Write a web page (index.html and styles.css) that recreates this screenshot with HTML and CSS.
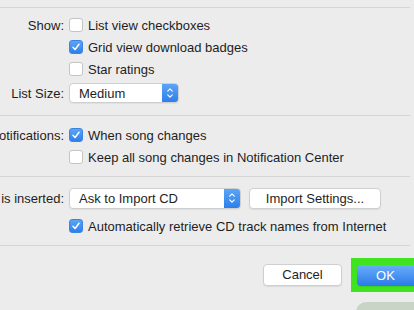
FILE: index.html
```html
<!DOCTYPE html>
<html>
<head>
<meta charset="utf-8">
<link rel="stylesheet" href="styles.css">
</head>
<body>
<div class="window">
  <div class="sep"></div>
  <section class="group g1">
    <div class="row">
      <div class="label">Show:</div>
      <label class="check"><span class="box"></span>List view checkboxes</label>
    </div>
    <div class="row">
      <div class="label"></div>
      <label class="check"><span class="box on"><svg viewBox="0 0 13 13"><path d="M3.2 6.8 L5.5 9.2 L9.8 3.6"/></svg></span>Grid view download badges</label>
    </div>
    <div class="row">
      <div class="label"></div>
      <label class="check"><span class="box"></span>Star ratings</label>
    </div>
    <div class="row row-select">
      <div class="label">List Size:</div>
      <div class="select size">
        <span class="val">Medium</span>
        <span class="stepper"><svg viewBox="0 0 16 20"><path d="M5.5 8 L8 5.5 L10.5 8 M5.5 12 L8 14.5 L10.5 12"/></svg></span>
      </div>
    </div>
  </section>
  <div class="sep"></div>
  <section class="group g2">
    <div class="row">
      <div class="label">Notifications:</div>
      <label class="check"><span class="box on"><svg viewBox="0 0 13 13"><path d="M3.2 6.8 L5.5 9.2 L9.8 3.6"/></svg></span>When song changes</label>
    </div>
    <div class="row">
      <div class="label"></div>
      <label class="check"><span class="box"></span>Keep all song changes in Notification Center</label>
    </div>
  </section>
  <div class="sep"></div>
  <section class="group g3">
    <div class="row row-select">
      <div class="label">When a CD is inserted:</div>
      <div class="select cd">
        <span class="val">Ask to Import CD</span>
        <span class="stepper"><svg viewBox="0 0 16 20"><path d="M5.5 8 L8 5.5 L10.5 8 M5.5 12 L8 14.5 L10.5 12"/></svg></span>
      </div>
      <button class="btn import">Import Settings...</button>
    </div>
    <div class="row">
      <div class="label"></div>
      <label class="check"><span class="box on"><svg viewBox="0 0 13 13"><path d="M3.2 6.8 L5.5 9.2 L9.8 3.6"/></svg></span>Automatically retrieve CD track names from Internet</label>
    </div>
  </section>
  <div class="sep"></div>
  <footer class="footer">
    <button class="btn cancel">Cancel</button>
    <div class="highlight"><button class="btn ok">OK</button></div>
  </footer>
  <div class="blob"></div>
</div>
</body>
</html>
```
FILE: styles.css
```css
html, body {
  margin: 0;
  padding: 0;
  background: #ececec;
  overflow: hidden;
}
body {
  width: 414px;
  height: 310px;
  font-family: "Liberation Sans", Arial, sans-serif;
  font-size: 13px;
  color: #1e1e1e;
}
.window {
  position: relative;
  padding-top: 7px;
  height: 303px;
}
.sep {
  height: 1px;
  background: #d5d5d5;
  margin-right: 4px;
}
.group {
  display: flex;
  flex-direction: column;
}
.g1 { padding: 6px 0 9px; }
.g2 { padding: 8px 0 8px; }
.g3 { padding: 10px 0 8px; gap: 6px; }
.row {
  display: flex;
  align-items: center;
  height: 22px;
}
.row-select { height: 26px; }
.g3 .row-select { height: 22px; }
.label {
  width: 64px;
  flex: none;
  display: flex;
  justify-content: flex-end;
  white-space: nowrap;
  margin-right: 5px;
}
.check {
  display: flex;
  align-items: center;
  white-space: nowrap;
}
.box {
  width: 12px;
  height: 12px;
  border: 1px solid #c4c4c4;
  border-radius: 3px;
  background: #fff;
  margin-right: 5px;
  box-sizing: content-box;
  display: flex;
}
.box.on {
  background: linear-gradient(#5aa5f7, #2f7fea);
  border-color: #3b84e4;
}
.box svg {
  width: 12px;
  height: 12px;
}
.box svg path, .stepper svg path {
  fill: none;
  stroke: #fff;
  stroke-width: 1.6;
  stroke-linecap: round;
  stroke-linejoin: round;
}
.select {
  height: 20px;
  display: flex;
  align-items: stretch;
  background: #fff;
  border: 1px solid #cfcfcf;
  border-radius: 4px;
  box-sizing: border-box;
  overflow: hidden;
  box-shadow: 0 1px 1px rgba(0,0,0,0.06);
}
.select .val {
  flex: 1;
  display: flex;
  align-items: center;
  padding-left: 9px;
}
.stepper {
  width: 16px;
  background: linear-gradient(#5aa5f7, #2f7fea);
  display: flex;
  align-items: center;
  justify-content: center;
}
.stepper svg {
  width: 16px;
  height: 18px;
}
.stepper svg path { stroke-width: 1.3; }
.size { width: 110px; }
.cd { width: 172px; height: 21px; }
.btn {
  font-family: inherit;
  font-size: 13px;
  color: #1e1e1e;
  background: #fff;
  border: 1px solid #cfcfcf;
  border-radius: 4px;
  box-shadow: 0 1px 1px rgba(0,0,0,0.08);
  padding: 0;
  height: 21px;
}
.import {
  width: 132px;
  margin-left: 8px;
}
.footer {
  display: flex;
  justify-content: flex-end;
  align-items: center;
  gap: 9px;
  height: 57px;
  padding-bottom: 0;
}
.cancel {
  width: 79px;
  height: 22px;
}
.highlight {
  width: 63px;
  height: 34px;
  box-sizing: border-box;
  background: #3fe31e;
  padding: 7px 0 6px 6px;
  display: flex;
}
.ok {
  flex: 1;
  height: 21px;
  border: none;
  border-radius: 4px 0 0 4px;
  color: #fff;
  background: linear-gradient(#6aaef9, #2a7ae8);
}
.blob {
  position: absolute;
  left: 356px;
  top: 302px;
  width: 70px;
  height: 20px;
  border-radius: 10px;
  background: #c9d4c6;
}
```
